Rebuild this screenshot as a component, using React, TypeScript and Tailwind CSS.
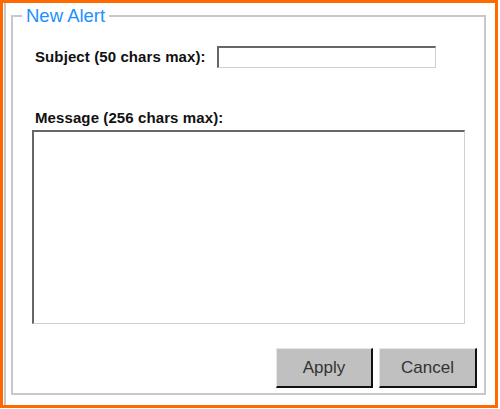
import { useState } from "react";

export default function App() {
  const [subject, setSubject] = useState("");
  const [message, setMessage] = useState("");

  return (
    <div
      className="w-[498px] h-[408px] border-[3px] border-[#ff6a00] bg-white"
      style={{ fontFamily: '"Liberation Sans", Arial, sans-serif' }}
    >
      <div className="h-full ml-px border-l-2 border-[#c8c8c8] pl-[5px] pt-[3px]">
        {/* Alert form */}
        <fieldset className="w-[475px] h-[389px] border-2 border-[#c8c8c8] m-0 p-0">
          <legend className="ml-[9px] px-1 text-[18.5px] leading-[19px] text-[#1e90ff]">
            New Alert
          </legend>

          <div className="flex items-center mt-[21px] pl-[22px]">
            <label className="text-[15px] leading-[18px] font-bold text-[#111] tracking-[0.1px]">
              Subject (50 chars max):
            </label>
            <input
              value={subject}
              maxLength={50}
              onChange={e => setSubject(e.target.value)}
              className="ml-[11px] w-[219px] h-[22px] bg-white border-t-2 border-l-2 border-[#666] border-r border-b border-r-[#d4d0c8] border-b-[#d4d0c8] outline-none text-[13px] px-1"
            />
          </div>

          <p className="mt-[41px] pl-[22px] text-[15px] leading-[18px] font-bold text-[#111] tracking-[0.1px]">
            Message (256 chars max):
          </p>
          <textarea
            value={message}
            maxLength={256}
            onChange={e => setMessage(e.target.value)}
            className="block mt-[3px] ml-[19px] w-[433px] h-[194px] resize-none bg-white border-t-2 border-l-2 border-[#666] border-r border-b border-r-[#d4d0c8] border-b-[#d4d0c8] outline-none text-[13px] p-1"
          />

          <div className="flex justify-end gap-[6px] mt-[24px] pr-[7px]">
            <button className="w-[97px] h-[40px] bg-[#c0c0c0] border-t border-l border-[#e6e6e6] border-r-2 border-b-2 border-r-[#111] border-b-[#111] text-[17px] text-[#333]">
              Apply
            </button>
            <button className="w-[98px] h-[40px] bg-[#c0c0c0] border-t border-l border-[#e6e6e6] border-r-2 border-b-2 border-r-[#111] border-b-[#111] text-[17px] text-[#333]">
              Cancel
            </button>
          </div>
        </fieldset>
      </div>
    </div>
  );
}
